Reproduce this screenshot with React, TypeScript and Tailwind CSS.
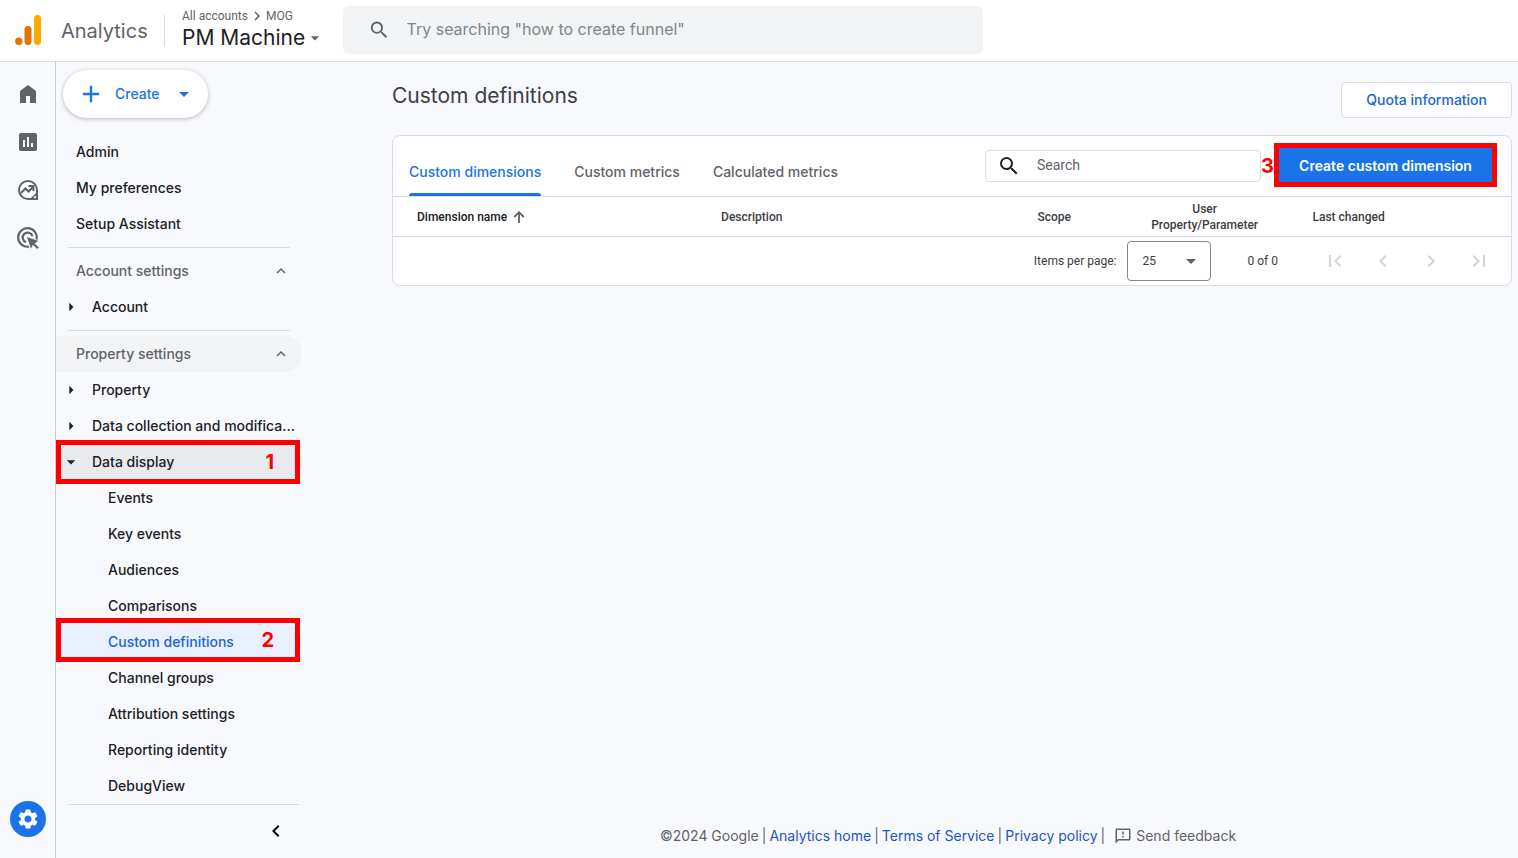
import React from 'react';
import {
  MdAdd,
  MdArrowDropDown,
  MdArrowRight,
  MdChevronLeft,
  MdChevronRight,
  MdExpandLess,
  MdFirstPage,
  MdInsertChart,
  MdLastPage,
  MdOutlineFeedback,
  MdSearch,
  MdSettings,
} from 'react-icons/md';

const displayItems = [
  'Events',
  'Key events',
  'Audiences',
  'Comparisons',
  'Custom definitions',
  'Channel groups',
  'Attribution settings',
  'Reporting identity',
  'DebugView',
];

const Logo = () => (
  <svg width="28" height="32" viewBox="0 0 28 32" aria-hidden="true">
    <rect x="19" y="0" width="7" height="30" rx="3.5" fill="#f9ab00" />
    <rect x="9.5" y="11" width="7" height="19" rx="3.5" fill="#e37400" />
    <circle cx="3.8" cy="26.3" r="3.7" fill="#e37400" />
  </svg>
);

const HomeIcon = () => (
  <svg width="24" height="24" viewBox="0 0 24 24" fill="currentColor" aria-hidden="true">
    <path d="M4 21V9l8-6 8 6v12h-6v-7h-4v7z" />
  </svg>
);

const ExploreIcon = () => (
  <svg width="22" height="22" viewBox="0 0 22 22" fill="none" stroke="currentColor" strokeWidth="2" aria-hidden="true">
    <path d="M20 11a9 9 0 1 0-9 9h9z" />
    <path d="M20 13v7h-7z" fill="currentColor" stroke="none" />
    <path d="M4 14l4.5-4.5 3 3 4.5-4.5" strokeWidth="2.2" />
    <path d="M11.5 7h5v5" />
    <circle cx="18" cy="18.2" r="1.1" fill="#f8f9fc" stroke="none" />
  </svg>
);

const AdvertisingIcon = () => (
  <svg width="22" height="22" viewBox="0 0 22 22" fill="none" stroke="currentColor" strokeWidth="2.2" aria-hidden="true">
    <path d="M19.5 12.5A9.3 9.3 0 1 0 12 19.6" />
    <path d="M15.5 9.3A5 5 0 1 0 9 15.3" />
    <path d="M10 10l11.5 4-4 2.2 4.3 4.2-1.6 1.6-4.3-4.3-1.9 4.1z" fill="currentColor" stroke="none" />
  </svg>
);

const SortIcon = () => (
  <svg width="16" height="16" viewBox="0 0 16 16" fill="none" stroke="#5f6368" strokeWidth="1.8" aria-hidden="true">
    <path d="M8 14V3.5M3.2 8L8 3.2 12.8 8" />
  </svg>
);

const Highlight = ({ className }: { className: string }) => (
  <span className={`pointer-events-none absolute left-0 z-10 h-11 w-[244px] border-5 border-[#ff0000] ${className}`} />
);

const Divider = () => (
  <div className="flex h-[11px] items-center pr-3 pl-3">
    <hr className="w-full border-[#dadce0]" />
  </div>
);

const MenuLink = ({ label }: { label: string }) => (
  <a href="#" className="flex h-9 items-center pl-5">{label}</a>
);

const SectionButton = ({ label, active }: { label: string, active?: boolean }) => (
  <button className={`flex h-9 w-full items-center justify-between rounded-r-full pr-3 pl-5 font-medium text-[#5f6368] ${active ? 'bg-[#f1f3f4]' : ''}`}>
    {label}
    <MdExpandLess size={18} />
  </button>
);

const GroupButton = ({ label }: { label: string }) => (
  <button className="flex h-9 w-full items-center pl-[5px] text-left whitespace-nowrap">
    <MdArrowRight size={20} className="mr-[11px] shrink-0" />
    {label}
  </button>
);

const Header = () => (
  <header className="flex h-[62px] shrink-0 items-center border-b border-[#dadce0] bg-white">
    <div className="flex w-[165px] shrink-0 items-center gap-[18px] border-r border-[#dadce0] pl-[15px]">
      <Logo />
      <span className="text-xl leading-8 text-[#5f6368]">Analytics</span>
    </div>
    <div className="w-[178px] shrink-0 pb-[3px] pl-[17px]">
      <div className="flex items-center font-['Roboto',sans-serif] text-xs leading-4 text-[#5f6368]">
        All accounts
        <MdChevronRight size={18} />
        MOG
      </div>
      <button className="flex items-center text-[21px] leading-[26px] whitespace-nowrap text-[#202124]">
        PM Machine
        <MdArrowDropDown size={20} className="text-[#5f6368]" />
      </button>
    </div>
    <label className="mb-[2px] flex h-12 w-[640px] items-center rounded-md bg-[#f1f3f4] pl-[25px]">
      <MdSearch size={24} className="text-[#5f6368]" />
      <input
        type="search"
        aria-label="Search Analytics"
        placeholder={'Try searching "how to create funnel"'}
        className="mb-[2px] ml-4 w-full bg-transparent text-base outline-none placeholder:text-[#80868b]"
      />
    </label>
  </header>
);

const Rail = () => (
  <nav aria-label="Main" className="flex w-14 shrink-0 flex-col items-center border-r border-[#cbcdd1] pt-5 pb-[21px] text-[#5f6368]">
    <a href="#" aria-label="Home" className="flex h-12 items-start"><HomeIcon /></a>
    <a href="#" aria-label="Reports" className="flex h-12 items-start"><MdInsertChart size={24} /></a>
    <a href="#" aria-label="Explore" className="flex h-12 items-start pt-[1px]"><ExploreIcon /></a>
    <a href="#" aria-label="Advertising" className="flex h-12 items-start pt-[1px]"><AdvertisingIcon /></a>
    <a href="#" aria-label="Admin" className="mt-auto flex size-9 items-center justify-center rounded-full bg-[#1a73e8] text-white">
      <MdSettings size={24} />
    </a>
  </nav>
);

const Sidebar = () => (
  <aside className="flex w-[246px] shrink-0 flex-col text-sm font-medium text-[#202124]">
    <button className="mt-2 ml-[7px] flex h-12 w-[145px] items-center rounded-full bg-white pl-3.5 text-[#1a73e8] shadow-[0_1px_4px_rgba(60,64,67,0.35)]">
      <MdAdd size={28} />
      <span className="ml-[10px] flex-1 text-left">Create</span>
      <MdArrowDropDown size={24} className="mr-3" />
    </button>
    <nav aria-label="Admin settings" className="mt-4">
      <MenuLink label="Admin" />
      <MenuLink label="My preferences" />
      <MenuLink label="Setup Assistant" />
      <Divider />
      <SectionButton label="Account settings" />
      <GroupButton label="Account" />
      <Divider />
      <SectionButton label="Property settings" active />
      <GroupButton label="Property" />
      <GroupButton label="Data collection and modifica..." />
      <div className="relative">
        <button className="flex h-9 w-full items-center rounded-r-full bg-[#e8eaed] pl-[5px]">
          <MdArrowDropDown size={20} className="mr-[11px]" />
          Data display
        </button>
        <Highlight className="-top-1" />
        <span className="absolute top-1 right-7 text-xl font-bold text-[#ff0000]">1</span>
      </div>
      {displayItems.map((item) => {
        const current = item === 'Custom definitions';
        return (
          <div key={item} className="relative">
            <a
              href="#"
              className={`flex h-9 items-center rounded-r-full pl-[52px] ${current ? 'bg-[#e8f0fe] text-[#1967d2]' : ''}`}
            >
              {item}
            </a>
            {current && <Highlight className="-top-[6px]" />}
            {current && <span className="absolute top-[2px] right-7 text-xl font-bold text-[#ff0000]">2</span>}
          </div>
        );
      })}
    </nav>
    <div className="mr-[3px] ml-3 flex justify-end border-t border-[#dadce0] pt-3.5 pr-[11px]">
      <button aria-label="Collapse menu">
        <MdChevronLeft size={24} className="text-black" />
      </button>
    </div>
  </aside>
);

const Toolbar = () => (
  <div className="flex h-[61px] items-start border-b border-[#dadce0] pl-4">
    <div role="tablist" className="flex flex-1 gap-[33px] self-end text-sm font-medium text-[#5f6368]">
      <button role="tab" aria-selected="true" className="flex h-12 flex-col justify-between pt-3.5 text-[#1a73e8]">
        Custom dimensions
        <span className="h-[3px] w-full rounded-t-sm bg-[#1a73e8]" />
      </button>
      <button role="tab" aria-selected="false" className="flex h-12 pt-3.5">Custom metrics</button>
      <button role="tab" aria-selected="false" className="flex h-12 pt-3.5">Calculated metrics</button>
    </div>
    <label className="mt-3.5 flex h-8 w-[276px] items-center rounded border border-[#dadce0] pl-[11px]">
      <MdSearch size={24} className="shrink-0 text-[#202124]" />
      <input
        type="search"
        aria-label="Search dimensions"
        placeholder="Search"
        className="mb-[2px] ml-4 w-full bg-transparent font-['Roboto',sans-serif] text-sm outline-none placeholder:text-[#5f6368]"
      />
    </label>
    <span className="mt-3.5 flex w-[13px] justify-center text-xl leading-8 font-bold text-[#ff0000]">3</span>
    <button className="mt-[7px] mr-3.5 h-11 w-[223px] border-5 border-[#ff0000] bg-[#1a73e8] pt-[2px] text-sm font-semibold whitespace-nowrap text-white">
      Create custom dimension
    </button>
  </div>
);

const DefinitionsTable = () => (
  <table className="w-full table-fixed font-['Roboto',sans-serif] text-xs leading-4 text-[#3c4043]">
    <thead>
      <tr className="h-[39px] border-b border-[#dadce0] text-left">
        <th className="w-[27.2%] pt-[2px] pl-6 font-medium text-[#202124]" aria-sort="ascending">
          <button className="flex items-center gap-1">
            Dimension name
            <SortIcon />
          </button>
        </th>
        <th className="w-[28.3%] pt-[2px] pl-6 font-medium">Description</th>
        <th className="w-[9.6%] pt-[2px] pl-6 font-medium">Scope</th>
        <th className="w-[15%] pt-[2px] text-center font-medium">User<br />Property/Parameter</th>
        <th className="pt-[2px] pl-6 font-medium">Last changed</th>
      </tr>
    </thead>
    <tbody />
  </table>
);

const Paginator = () => (
  <div className="flex h-12 items-center justify-end pr-2 font-['Roboto',sans-serif] text-xs text-[#3c4043]">
    <label htmlFor="page-size" className="mr-[10px]">Items per page:</label>
    <div className="relative">
      <select id="page-size" className="h-10 w-[84px] appearance-none rounded border border-[#80868b] bg-white pl-[15px]">
        <option>25</option>
        <option>50</option>
        <option>100</option>
      </select>
      <MdArrowDropDown size={24} className="pointer-events-none absolute top-2 right-2 text-[#5f6368]" />
    </div>
    <span className="mr-[33px] ml-[37px]">0 of 0</span>
    <div className="flex text-[#d2d4d7]">
      <button disabled aria-label="First page" className="flex size-12 items-center justify-center"><MdFirstPage size={24} /></button>
      <button disabled aria-label="Previous page" className="flex size-12 items-center justify-center"><MdChevronLeft size={24} /></button>
      <button disabled aria-label="Next page" className="flex size-12 items-center justify-center"><MdChevronRight size={24} /></button>
      <button disabled aria-label="Last page" className="flex size-12 items-center justify-center"><MdLastPage size={24} /></button>
    </div>
  </div>
);

const Footer = () => (
  <footer className="mt-auto flex items-center justify-center gap-[3px] pr-2 pb-3 text-sm leading-5 text-[#5f6368]">
    <span>©2024 Google</span>|
    <a href="#" className="text-[#1a56c4]">Analytics home</a>|
    <a href="#" className="text-[#1a56c4]">Terms of Service</a>|
    <a href="#" className="text-[#1a56c4]">Privacy policy</a>|
    <button className="ml-[6px] flex items-center gap-1">
      <MdOutlineFeedback size={18} />
      Send feedback
    </button>
  </footer>
);

const App: React.FC = () => {
  return (
    <div className="flex min-h-screen flex-col bg-[#f8f9fc] font-['Inter',sans-serif]">
      <Header />
      <div className="flex flex-1">
        <Rail />
        <Sidebar />
        <main className="ml-[90px] flex flex-1 flex-col pr-[6px]">
          <div className="mt-5 flex items-start justify-between">
            <h1 className="text-[21px] leading-7 text-[#3c4043]">Custom definitions</h1>
            <button className="h-9 rounded border border-[#dadce0] bg-white px-6 text-sm font-medium text-[#1967d2]">
              Quota information
            </button>
          </div>
          <section className="mt-[17px] overflow-hidden rounded-lg border border-[#dadce0] bg-white">
            <Toolbar />
            <DefinitionsTable />
            <Paginator />
          </section>
          <Footer />
        </main>
      </div>
    </div>
  );
};

export default App;
